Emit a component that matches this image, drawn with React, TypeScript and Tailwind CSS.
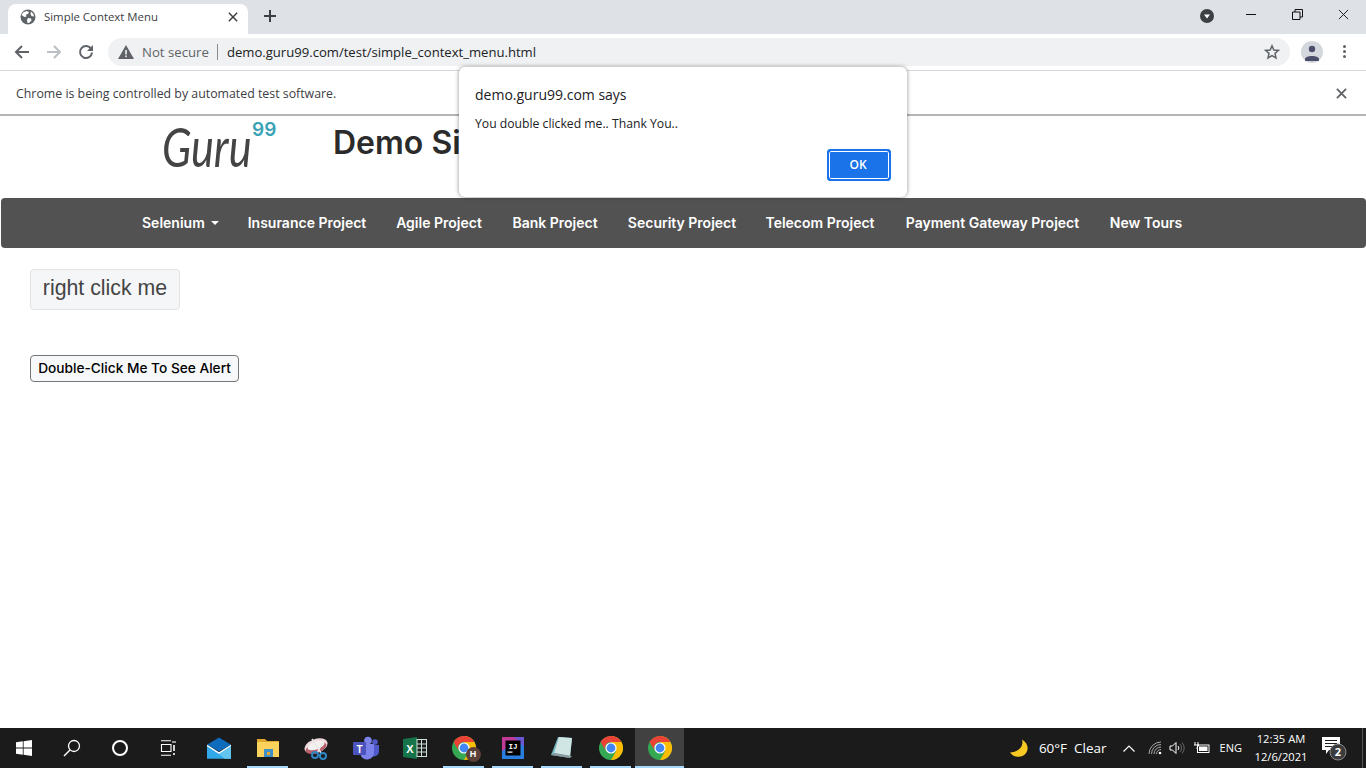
import React from 'react';

const uiFont = "font-['Open_Sans','Noto_Sans',sans-serif]";
const siteFont = "font-['Inter','Noto_Sans',sans-serif]";

// ---- Chrome icons ----

const Globe = () => (
  <svg width="16" height="16" viewBox="0 0 16 16">
    <circle cx="8" cy="8" r="7.5" fill="#5f6368" />
    <path d="M3 3.5 L6.5 2 L9 3 L8 5 L6 5.5 L6.5 7.5 L4.5 8 L1.5 6 Z M8 9 L11 9.5 L11.5 11.5 L9 14 L7.5 14 L7 11 Z M11 2.5 L13.5 5 L14 7.5 L11.5 7 L10.5 5 Z" fill="#fff" />
  </svg>
);

const ArrowIcon = ({ color, flip }: { color: string; flip?: boolean }) => (
  <svg width="16" height="16" viewBox="0 0 16 16" className={flip ? 'rotate-180' : ''}>
    <path d="M15 8 H2 M8 2 L2 8 L8 14" fill="none" stroke={color} strokeWidth="2" />
  </svg>
);

const Reload = () => (
  <svg width="16" height="16" viewBox="0 0 16 16">
    <path d="M13.2 5 A6 6 0 1 0 14 8.5" fill="none" stroke="#5f6368" strokeWidth="2" />
    <path d="M15 1 V7 H9 Z" fill="#5f6368" />
  </svg>
);

const CrossIcon = ({ size, color, width }: { size: number; color: string; width: number }) => (
  <svg width={size} height={size} viewBox="0 0 12 12">
    <path d="M1 1 L11 11 M11 1 L1 11" fill="none" stroke={color} strokeWidth={width} />
  </svg>
);

const Warning = () => (
  <svg width="16" height="14" viewBox="0 0 16 14">
    <path d="M8 0 L16 14 H0 Z" fill="#5f6368" />
    <rect x="7.2" y="5" width="1.6" height="4.5" fill="#f1f3f4" />
    <rect x="7.2" y="10.5" width="1.6" height="1.6" fill="#f1f3f4" />
  </svg>
);

const StarIcon = () => (
  <svg width="16" height="16" viewBox="0 0 16 16">
    <path d="M8 1.8 L9.8 6 L14.5 6.4 L11 9.4 L12 14 L8 11.6 L4 14 L5 9.4 L1.5 6.4 L6.2 6 Z" fill="none" stroke="#5f6368" strokeWidth="1.5" />
  </svg>
);

// ---- Taskbar icons ----

const WindowsLogo = () => (
  <svg width="16" height="16" viewBox="0 0 16 16">
    <path d="M0 2.3 L6.8 1.3 V7.5 H0 Z M7.6 1.2 L16 0 V7.5 H7.6 Z M0 8.4 H6.8 V14.7 L0 13.7 Z M7.6 8.4 H16 V16 L7.6 14.8 Z" fill="#fff" />
  </svg>
);

const SearchIcon = () => (
  <svg width="18" height="18" viewBox="0 0 18 18">
    <circle cx="11" cy="7" r="5.5" fill="none" stroke="#fff" strokeWidth="1.3" />
    <path d="M7 11 L1 17" stroke="#fff" strokeWidth="1.5" />
  </svg>
);

const TaskView = () => (
  <svg width="16" height="16" viewBox="0 0 16 16">
    <path d="M1 .7 H11 M1 15.3 H11 M1.5 4.5 H11 V11.5 H1.5 Z M13 1 V3 M15 1 V3" fill="none" stroke="#fff" strokeWidth="1.1" />
    <path d="M14 5 V11 M14 13 V15" fill="none" stroke="#fff" strokeWidth="1.6" />
  </svg>
);

const MailIcon = () => (
  <svg width="24" height="23" viewBox="0 0 26 24">
    <path d="M0 8 L13 0 L26 8 L13 15 Z" fill="#0f6cbd" />
    <path d="M0 8 L13 16 L26 8 V23 H0 Z" fill="#31a8e8" />
    <path d="M0 8 L13 16 L26 8 L26 9.5 L13 18 L0 9.5 Z" fill="#fff" />
    <path d="M13 18 L26 9.5 V23 H19 Z" fill="#62c5f0" />
  </svg>
);

const FolderIcon = () => (
  <svg width="22" height="20" viewBox="0 0 22 20">
    <path d="M0 1 H8 L10 3 H22 V19 H0 Z" fill="#e0a92e" />
    <rect x="0" y="4" width="22" height="15" fill="#fbd25c" />
    <rect x="7" y="11" width="9" height="8" fill="#3f8fc8" />
    <rect x="10" y="14" width="3" height="3" fill="#e0a92e" />
  </svg>
);

const SnipIcon = () => (
  <svg width="26" height="24" viewBox="0 0 26 24">
    <ellipse cx="12" cy="10" rx="12" ry="7" fill="#f0d9dc" transform="rotate(-20 12 10)" />
    <ellipse cx="12" cy="12" rx="11" ry="5" fill="#a33848" opacity=".75" transform="rotate(-20 12 12)" />
    <ellipse cx="12" cy="9.5" rx="9" ry="4" fill="#f5f0f0" transform="rotate(-20 12 9.5)" />
    <path d="M8 3 L17 17 M20 4 L13 17" stroke="#e8e8e8" strokeWidth="1.5" />
    <circle cx="19" cy="20" r="3" fill="none" stroke="#2f86c5" strokeWidth="2" />
    <circle cx="11" cy="19" r="3" fill="none" stroke="#2f86c5" strokeWidth="2" />
  </svg>
);

const TeamsIcon = () => (
  <svg width="26" height="24" viewBox="0 0 26 24">
    <circle cx="15" cy="4.5" r="3.8" fill="#7b83eb" />
    <circle cx="22" cy="6" r="2.8" fill="#5059c9" />
    <path d="M18 9 H26 V15 A5 5 0 0 1 19 20 Z" fill="#5059c9" />
    <path d="M7 8 H21 V17 A7 7 0 0 1 8 20 Z" fill="#7b83eb" />
    <rect x="0" y="6" width="13" height="13" rx="1" fill="#4b53bc" />
    <text x="6.5" y="16.5" textAnchor="middle" fontSize="10" fontWeight="700" fill="#fff" fontFamily="Liberation Sans">T</text>
  </svg>
);

const ExcelIcon = () => (
  <svg width="24" height="22" viewBox="0 0 24 22">
    <path d="M0 2 L14 0 V22 L0 20 Z" fill="#17744a" />
    <rect x="14" y="2.5" width="9.5" height="17" fill="#1c1c1c" stroke="#cfe3d8" strokeWidth="1" />
    <path d="M14 7 H23 M14 11 H23 M14 15 H23 M18.5 3 V19" stroke="#cfe3d8" strokeWidth="1" />
    <text x="7" y="15.5" textAnchor="middle" fontSize="11" fontWeight="700" fill="#fff" fontFamily="Liberation Sans">X</text>
  </svg>
);

const ChromeIcon = ({ size = 24 }: { size?: number }) => (
  <svg width={size} height={size} viewBox="0 0 24 24">
    <circle cx="12" cy="12" r="12" fill="#34a853" />
    <path d="M12 0 A12 12 0 0 1 22.4 6 L12 6 Z M12 6 H22.4 A12 12 0 0 1 12 24 L17.2 15 Z" fill="#fbbc04" />
    <path d="M1.6 6 A12 12 0 0 1 22.4 6 H12 A6 6 0 0 0 6.8 15 Z" fill="#ea4335" />
    <circle cx="12" cy="12" r="5.6" fill="#fff" />
    <circle cx="12" cy="12" r="4.4" fill="#4285f4" />
  </svg>
);

const IdeaIcon = () => (
  <svg width="22" height="22" viewBox="0 0 22 22">
    <rect width="22" height="22" fill="#2a7ee0" />
    <path d="M0 0 H22 L0 14 Z" fill="#d92f8a" opacity=".85" />
    <path d="M22 0 V10 L12 0 Z" fill="#6b57d2" />
    <rect x="3.5" y="3.5" width="15" height="15" fill="#000" />
    <text x="11" y="11.5" textAnchor="middle" fontSize="7.5" fontWeight="700" fill="#fff" fontFamily="Liberation Mono">IJ</text>
    <rect x="5.5" y="14.5" width="5" height="1.2" fill="#fff" />
  </svg>
);

const NotepadIcon = () => (
  <svg width="24" height="24" viewBox="0 0 24 24">
    <path d="M8 1 L22 2 L20 22 L1 19 Z" fill="#6fb3bd" />
    <path d="M9 1 L22 2 L20 20 L4 17 Z" fill="#cfe6e4" />
    <path d="M1 19 L20 22 L22 20 L4 17 Z" fill="#8a9ba0" />
  </svg>
);

const MoonIcon = () => (
  <svg width="20" height="20" viewBox="0 0 20 20">
    <path d="M13 1.5 C15 8 10 14 1 14.5 C4 19 10 20 14.5 17.5 C20 14 20.5 6 13 1.5 Z" fill="#f9c923" />
  </svg>
);

const WifiIcon = () => (
  <svg width="14" height="14" viewBox="0 0 14 14">
    <path d="M1 13 A12 12 0 0 1 13 1 M3.5 13 A9.5 9.5 0 0 1 13 3.5 M6 13 A7 7 0 0 1 13 6 M8.5 13 A4.5 4.5 0 0 1 13 8.5" fill="none" stroke="#aaa" strokeWidth="1" />
    <circle cx="12" cy="12" r="1.3" fill="#fff" />
  </svg>
);

const SpeakerIcon = () => (
  <svg width="16" height="14" viewBox="0 0 16 14">
    <path d="M1 5 H3.5 L7 1.5 V12.5 L3.5 9 H1 Z" fill="none" stroke="#fff" strokeWidth="1" />
    <path d="M9 5 A3 3 0 0 1 9 9" fill="none" stroke="#fff" strokeWidth="1" />
    <path d="M11 3 A6 6 0 0 1 11 11 M13 1.5 A8 8 0 0 1 13 12.5" fill="none" stroke="#666" strokeWidth="1" />
  </svg>
);

const BatteryIcon = () => (
  <svg width="16" height="12" viewBox="0 0 16 12">
    <rect x="3.5" y="3" width="11.5" height="7.5" fill="none" stroke="#fff" strokeWidth="1" />
    <rect x="5" y="4.5" width="8.5" height="4.5" fill="#fff" />
    <path d="M1 0 V3 M4 0 V3 M0 3 H5 L2.5 6.5" fill="none" stroke="#fff" strokeWidth="1" />
  </svg>
);

const NotificationIcon = () => (
  <svg width="26" height="28" viewBox="0 0 26 28">
    <path d="M1 3 H19 V16 H8 L5 20 V16 H1 Z" fill="#fff" />
    <path d="M4 6.5 H16 M4 9.5 H16 M4 12.5 H11" stroke="#1c1c1c" strokeWidth="1" />
    <circle cx="17" cy="18" r="8" fill="#3b3b3b" stroke="#8a8a8a" strokeWidth="1" />
    <text x="17" y="22" textAnchor="middle" fontSize="11" fontWeight="700" fill="#fff" fontFamily="Open Sans">2</text>
  </svg>
);

// ---- Browser chrome ----

const TabStrip = () => (
  <div className="h-[34px] bg-[#dee1e6] flex items-end relative shrink-0">
    <div className="ml-2 w-[240px] h-[30px] bg-white rounded-t-lg flex items-center pl-[12px] pr-[10px] pb-[5px]">
      <Globe />
      <span className="ml-2 text-[11.4px] text-[#3c4043] flex-1">Simple Context Menu</span>
      <CrossIcon size={10} color="#3c4043" width={1.8} />
    </div>
    <div className="ml-[15px] h-[30px] flex items-center pb-[6px]">
      <svg width="14" height="14" viewBox="0 0 14 14">
        <path d="M7 1 V13 M1 7 H13" stroke="#3c4043" strokeWidth="2" />
      </svg>
    </div>
    <div className="ml-auto h-[34px] flex items-center">
      <svg width="14" height="14" viewBox="0 0 14 14" className="mt-[-2px] mr-[14px]">
        <circle cx="7" cy="7" r="7" fill="#3c4043" />
        <path d="M4 5.5 H10 L7 9.5 Z" fill="#fff" />
      </svg>
      <div className="w-[46px] flex justify-center pb-[6px]">
        <div className="w-[10px] h-px bg-[#111]" />
      </div>
      <div className="w-[46px] flex justify-center pb-[6px]">
        <svg width="11" height="11" viewBox="0 0 11 11">
          <path d="M.5 3 H8 V10.5 H.5 Z M3 3 V.5 H10.5 V8 H8" fill="none" stroke="#111" strokeWidth="1" />
        </svg>
      </div>
      <div className="w-[46px] flex justify-center pb-[6px]">
        <CrossIcon size={11} color="#111" width={1} />
      </div>
    </div>
  </div>
);

const Toolbar = () => (
  <div className="h-[37px] bg-white border-b border-[#d6d8db] flex items-center pb-[1px] shrink-0">
    <div className="ml-[14px]"><ArrowIcon color="#5f6368" /></div>
    <div className="ml-[16px]"><ArrowIcon color="#bcbfc3" flip /></div>
    <div className="ml-[16px]"><Reload /></div>
    <div className="ml-[14px] w-[1182px] h-[28px] rounded-full bg-[#eff1f3] flex items-center pl-[10px] pr-[10px]">
      <Warning />
      <span className="ml-[8px] pt-[2px] text-[13.2px] text-[#5f6368]">Not secure</span>
      <div className="ml-[8px] mr-[9px] w-px h-4 bg-[#888c90]" />
      <span className="pt-[2px] text-[13.1px] text-[#202124]">demo.guru99.com/test/simple_context_menu.html</span>
      <div className="ml-auto"><StarIcon /></div>
    </div>
    <div className="ml-[11px] w-[22px] h-[22px] rounded-full bg-[#d5d7de] overflow-hidden flex justify-center">
      <svg width="14" height="18" viewBox="0 0 14 18" className="mt-[4px]">
        <circle cx="7" cy="4" r="3.2" fill="#4a4e69" />
        <path d="M0 14 C0 10 14 10 14 14 V16 H0 Z" fill="#4a4e69" />
      </svg>
    </div>
    <div className="ml-[20px] flex flex-col gap-[2px]">
      <div className="w-[3px] h-[3px] rounded-full bg-[#5f6368]" />
      <div className="w-[3px] h-[3px] rounded-full bg-[#5f6368]" />
      <div className="w-[3px] h-[3px] rounded-full bg-[#5f6368]" />
    </div>
  </div>
);

const InfoBar = () => (
  <div className="h-[45px] bg-white border-b-2 border-[#b5b5b5] flex items-center justify-between pl-4 pr-[19px] shrink-0">
    <span className="mt-[3px] text-[12.35px] text-[#3c4043]">Chrome is being controlled by automated test software.</span>
    <div className="mt-[1px]"><CrossIcon size={11} color="#5f6368" width={2} /></div>
  </div>
);

// ---- Page ----

const navItems = [
  { label: 'Insurance Project', w: 'w-[118px]' },
  { label: 'Agile Project', w: 'w-[86px]' },
  { label: 'Bank Project', w: 'w-[86px]' },
  { label: 'Security Project', w: 'w-[108px]' },
  { label: 'Telecom Project', w: 'w-[108px]' },
  { label: 'Payment Gateway Project', w: 'w-[177px]' },
  { label: 'New Tours', w: 'w-[70px]' },
];

const SitePage = () => (
  <div className={`flex-1 bg-white ${siteFont}`}>
    <div className="h-[82px] flex">
      <div className="ml-[162px] mt-[2px] relative w-[114px]">
        <span className="inline-block origin-left scale-x-[0.8] font-['Lato'] font-normal italic text-[54px] leading-[58px] text-[#444]">Guru</span>
        <span className="absolute left-[90px] top-0 text-[19px] leading-[24px] font-semibold text-[#3aa3b5]">99</span>
      </div>
      <h1 className="ml-[57px] mt-[7px] text-[32px] leading-[40px] font-semibold text-[#2b2b2b] whitespace-nowrap">Demo Site</h1>
    </div>
    <nav className="ml-px h-[50px] bg-[#525252] rounded flex items-center gap-[30px] pl-[141px] pb-[1px] text-[14px] font-semibold text-white">
      <div className="w-[76px] flex items-center whitespace-nowrap">
        Selenium
        <span className="ml-[6px] border-x-4 border-t-4 border-x-transparent border-t-white" />
      </div>
      {navItems.map(item => (
        <div key={item.label} className={`${item.w} flex justify-center whitespace-nowrap`}>{item.label}</div>
      ))}
    </nav>
    <div className="pl-[30px] pt-[21px] flex flex-col items-start">
      <div className="w-[150px] h-[41px] pb-[1px] bg-[#f4f6f8] border border-[#e3e3e3] rounded-sm flex items-center justify-center font-['Liberation_Sans'] text-[21.3px] text-[#444]">
        right click me
      </div>
      <button className="mt-[45px] w-[209px] h-[27px] pb-[1px] bg-[#f7f8fa] border border-[#767676] rounded-sm text-[13.7px] font-medium text-black whitespace-nowrap">
        Double-Click Me To See Alert
      </button>
    </div>
  </div>
);

const AlertDialog = () => (
  <div className={`absolute left-[459px] top-[67px] w-[448px] h-[130px] bg-white rounded-md shadow-[0_0_4px_rgba(0,0,0,0.45)] ${uiFont}`}>
    <div className="pl-4 pt-[18px] text-sm leading-[20px] text-[#202124]">demo.guru99.com says</div>
    <div className="pl-4 pt-[11px] text-[12.2px] leading-[16px] text-[#202124]">You double clicked me.. Thank You..</div>
    <button className="absolute right-[16px] bottom-[16px] w-[64px] h-[32px] pr-[2px] rounded bg-[#1a73e8] border-2 border-[#1a73e8] ring-1 ring-inset ring-white text-xs font-semibold text-white outline-2 outline-[#1a73e8] -outline-offset-2">
      OK
    </button>
  </div>
);

// ---- Taskbar ----

const apps: { key: string; icon: React.ReactNode; running?: boolean; active?: boolean }[] = [
  { key: 'mail', icon: <MailIcon /> },
  { key: 'files', icon: <FolderIcon />, running: true },
  { key: 'snip', icon: <SnipIcon /> },
  { key: 'teams', icon: <TeamsIcon /> },
  { key: 'excel', icon: <ExcelIcon /> },
  {
    key: 'chrome-h',
    running: true,
    icon: (
      <div className="relative">
        <ChromeIcon />
        <div className="absolute -right-[5px] -bottom-[2px] w-[15px] h-[15px] rounded-full bg-[#5b4039] text-white text-[9px] font-bold flex items-center justify-center font-['Liberation_Sans']">H</div>
      </div>
    ),
  },
  { key: 'idea', icon: <IdeaIcon />, running: true },
  { key: 'notepad', icon: <NotepadIcon />, running: true },
  { key: 'chrome', icon: <ChromeIcon />, running: true },
  { key: 'chrome-active', icon: <ChromeIcon />, running: true, active: true },
];

const Taskbar = () => (
  <div className={`h-10 bg-[#1b1b1b] flex items-center shrink-0 text-white ${uiFont}`}>
    <div className="w-[48px] flex justify-center"><WindowsLogo /></div>
    <div className="w-[48px] flex justify-center"><SearchIcon /></div>
    <div className="w-[48px] flex justify-center">
      <div className="w-[16px] h-[16px] rounded-full border-2 border-white" />
    </div>
    <div className="w-[48px] flex justify-center"><TaskView /></div>
    <div className="flex h-full ml-[2px]">
      {apps.map(app => (
        <div key={app.key} className={`relative w-[49px] h-full flex items-center justify-center ${app.active ? 'bg-[#414141]' : ''}`}>
          {app.icon}
          {app.running && (
            <div className={`absolute bottom-0 h-[2px] bg-[#a5d8fa] ${app.active ? 'inset-x-0' : 'inset-x-[4px]'}`} />
          )}
        </div>
      ))}
    </div>
    <div className="ml-auto flex items-center h-full">
      <MoonIcon />
      <span className="ml-[10px] text-[13.5px]">60°F</span>
      <span className="ml-[7px] text-[13.5px]">Clear</span>
      <svg width="12" height="7" viewBox="0 0 12 7" className="ml-[16px]">
        <path d="M.5 6.5 L6 1 L11.5 6.5" fill="none" stroke="#fff" strokeWidth="1.2" />
      </svg>
      <div className="ml-[13px]"><WifiIcon /></div>
      <div className="ml-[7px]"><SpeakerIcon /></div>
      <div className="ml-[9px]"><BatteryIcon /></div>
      <span className="ml-[10px] text-[11px]">ENG</span>
      <div className="ml-[8px] w-[62px] text-center text-[11.2px] leading-[18px]">
        <div>12:35 AM</div>
        <div>12/6/2021</div>
      </div>
      <div className="ml-[9px]"><NotificationIcon /></div>
      <div className="ml-[15px] mr-[3px] w-px h-full bg-[#555]" />
    </div>
  </div>
);

export default function App() {
  return (
    <div className={`relative w-[1366px] h-[768px] overflow-hidden flex flex-col ${uiFont}`}>
      <TabStrip />
      <Toolbar />
      <InfoBar />
      <SitePage />
      <Taskbar />
      <AlertDialog />
    </div>
  );
}
